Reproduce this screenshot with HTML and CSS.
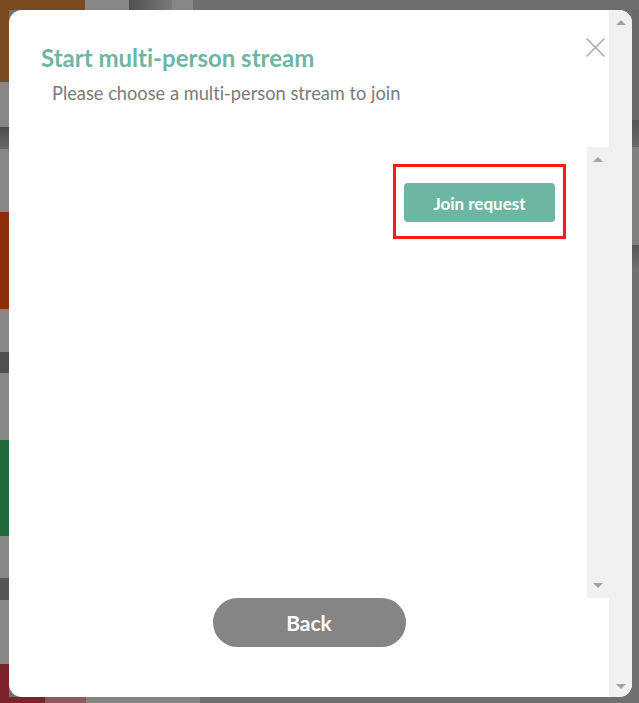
FILE: index.html
```html
<!DOCTYPE html>
<html lang="en">
<head>
<meta charset="utf-8">
<title>Start multi-person stream</title>
<link rel="stylesheet" href="styles.css">
</head>
<body>
<div class="dialog">
  <div class="dialog-main">
    <div class="dialog-header">
      <h1 class="dialog-title">Start multi-person stream</h1>
      <p class="dialog-subtitle">Please choose a multi-person stream to join</p>
      <button class="close-btn" aria-label="Close">
        <svg width="19" height="19" viewBox="0 0 19 19"><path d="M0.5 0.5 L18.5 18.5 M18.5 0.5 L0.5 18.5" stroke="#a3a3a3" stroke-width="1.3" fill="none"/></svg>
      </button>
    </div>
    <div class="stream-area">
      <div class="stream-list">
        <div class="stream-row">
          <button class="join-btn">Join request</button>
        </div>
        <div class="highlight-box"></div>
      </div>
      <div class="scrollbar">
        <span class="arrow arrow-up"></span>
        <span class="arrow arrow-down"></span>
      </div>
    </div>
    <div class="dialog-footer">
      <button class="back-btn">Back</button>
    </div>
  </div>
  <div class="scrollbar scrollbar-outer">
    <span class="arrow arrow-up"></span>
    <span class="arrow arrow-down"></span>
  </div>
</div>
</body>
</html>
```
FILE: styles.css
```css
html, body {
  margin: 0;
  height: 703px;
  overflow: hidden;
}
body {
  box-sizing: border-box;
  padding: 10px 7px 6px 9px;
  font-family: "Lato", "Open Sans", sans-serif;
  font-variant-ligatures: none;
  background:
    linear-gradient(to right, #7b4a20 0 85px, #878787 85px 129px, #4f4f4f 129px, #7a7a7a 172px, #878787 172px 193px, #6e6e6e 193px) left top / 100% 10px no-repeat,
    linear-gradient(to right, #7c2229 0 45px, #8a5a5e 45px 86px, #858585 86px 200px, #6f6f6f 200px) left bottom / 100% 6px no-repeat,
    linear-gradient(to bottom, #7b4a20 0 82px, #878787 82px 127px, #4a4a4a 127px, #6a6a6a 149px, #878787 149px 212px, #8a2e0c 212px 309px, #878787 309px 352px, #505050 352px 373px, #878787 373px 440px, #1e6a38 440px 536px, #878787 536px 578px, #555555 578px 600px, #878787 600px 664px, #7c2229 664px) left top / 9px 100% no-repeat,
    linear-gradient(to bottom, #6a6a6a 0 120px, #555555 120px, #6a6a6a 147px, #808080 147px 245px, #555555 245px, #717171 270px) right top / 7px 100% no-repeat,
    #717171;
}

.dialog {
  width: 623px;
  height: 687px;
  background: #ffffff;
  border-radius: 13px;
  overflow: hidden;
  display: flex;
}

.dialog-main {
  flex: 1;
  display: flex;
  flex-direction: column;
  position: relative;
}

.dialog-header {
  height: 137px;
  box-sizing: border-box;
  padding-top: 34px;
}
.dialog-title {
  margin: 0 0 0 32px;
  font-size: 24px;
  line-height: 28px;
  font-weight: 700;
  color: #6db6a3;
}
.dialog-subtitle {
  margin: 10px 0 0 43px;
  font-size: 18.25px;
  line-height: 22px;
  font-weight: 400;
  color: #7a7a7a;
}
.close-btn {
  position: absolute;
  left: 577px;
  top: 28px;
  width: 19px;
  height: 19px;
  padding: 0;
  border: 0;
  background: none;
  display: flex;
}

.stream-area {
  height: 451px;
  display: flex;
}
.stream-list {
  flex: 1;
  position: relative;
}
.stream-row {
  display: flex;
  justify-content: flex-end;
  padding: 36px 32px 0 0;
}
.join-btn {
  width: 151px;
  height: 39px;
  border: 0;
  border-radius: 4px;
  background: #6db6a3;
  color: #ffffff;
  font-family: "Lato", "Open Sans", sans-serif;
  font-variant-ligatures: none;
  font-size: 17px;
  font-weight: 700;
  padding: 1px 0 0;
}
.highlight-box {
  position: absolute;
  left: 384px;
  top: 17px;
  width: 173px;
  height: 75px;
  box-sizing: border-box;
  border: 3px solid #ff1a1a;
}

.scrollbar {
  width: 22px;
  background: #f0f0f0;
  display: flex;
  flex-direction: column;
  justify-content: space-between;
  align-items: center;
  padding: 10px 0;
  box-sizing: border-box;
}
.scrollbar-outer {
  width: 23px;
  padding: 10px 0 8px;
}
.arrow {
  width: 0;
  height: 0;
  border-left: 5px solid transparent;
  border-right: 5px solid transparent;
}
.arrow-up {
  border-bottom: 5px solid #a3a3a3;
}
.arrow-down {
  border-top: 5px solid #a3a3a3;
}

.dialog-footer {
  flex: 1;
  display: flex;
  justify-content: center;
  align-items: flex-start;
}
.back-btn {
  width: 193px;
  height: 49px;
  border: 0;
  border-radius: 25px;
  background: #858585;
  color: #ffffff;
  font-family: "Lato", "Open Sans", sans-serif;
  font-size: 21px;
  font-weight: 700;
  padding: 0;
}
```
